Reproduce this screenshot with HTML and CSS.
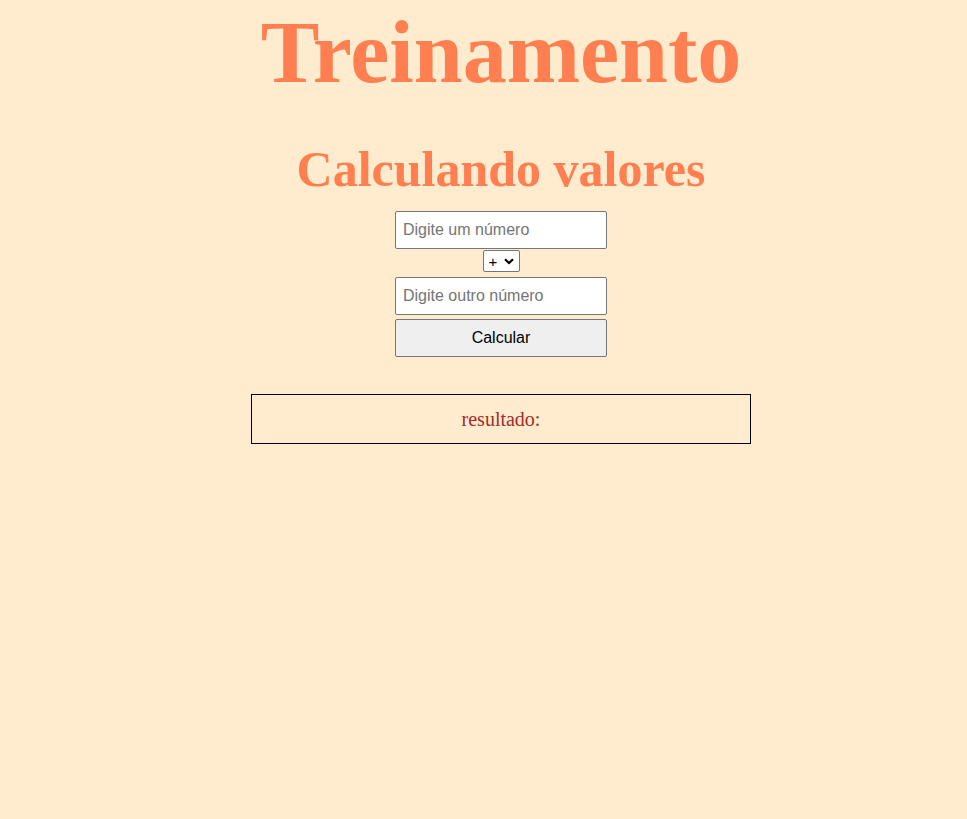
FILE: index.html
```html
<!DOCTYPE html>
<html lang="pt-BR">
<head>
<meta charset="utf-8">
<title>Treinamento</title>
<link rel="stylesheet" href="styles.css">
</head>
<body>
<h1 class="title">Treinamento</h1>
<h2 class="subtitle">Calculando valores</h2>
<form class="calc">
  <input class="field" type="number" placeholder="Digite um número">
  <span class="op-wrap">
    <select class="op">
      <option>+</option>
      <option>-</option>
      <option>*</option>
      <option>/</option>
    </select>
    <svg class="chev" width="10" height="7" viewBox="0 0 10 7"><path d="M1 1.2 L5 5 L9 1.2" fill="none" stroke="#000" stroke-width="2.2"/></svg>
  </span>
  <input class="field" type="number" placeholder="Digite outro número">
  <button class="btn" type="button">Calcular</button>
</form>
<div class="result">resultado:</div>
</body>
</html>
```
FILE: styles.css
```css
body {
  margin: 0;
  padding-left: 35px;
  background: #ffebcd;
  font-family: "Liberation Serif", "Times New Roman", serif;
  display: flex;
  flex-direction: column;
  align-items: center;
}
.title {
  color: #ff7f50;
  font-size: 88px;
  margin: 0;
  line-height: 102px;
  padding-top: 2px;
}
.subtitle {
  color: #ff7f50;
  font-size: 50px;
  margin: 37px 0 14px;
  line-height: 56px;
}
.calc {
  display: flex;
  flex-direction: column;
  align-items: center;
}
.field {
  box-sizing: border-box;
  width: 212px;
  height: 38px;
  font-family: "Liberation Sans", Arial, sans-serif;
  font-size: 16px;
  padding: 0 7px;
  border: 1px solid #767676;
  border-radius: 2px;
  background: #fff;
  margin: 0;
}
.field::placeholder { color: #757575; }
.op-wrap {
  position: relative;
  display: block;
  height: 22px;
  margin: 1px 0 5px;
}
.op {
  appearance: none;
  -webkit-appearance: none;
  box-sizing: border-box;
  width: 37px;
  height: 22px;
  padding: 0 0 0 5px;
  font-family: "Liberation Sans", Arial, sans-serif;
  font-size: 15px;
  color: #000;
  background: #fff;
  border: 1px solid #767676;
  border-radius: 2px;
  margin: 0;
}
.chev {
  position: absolute;
  right: 6px;
  top: 8px;
  pointer-events: none;
}
.btn {
  box-sizing: border-box;
  width: 212px;
  height: 38px;
  margin-top: 4px;
  font-family: "Liberation Sans", Arial, sans-serif;
  font-size: 16px;
  background: #efefef;
  border: 1px solid #767676;
  border-radius: 2px;
  color: #000;
}
.result {
  box-sizing: border-box;
  width: 500px;
  height: 50px;
  margin-top: 37px;
  border: 1px solid #000;
  display: flex;
  align-items: center;
  justify-content: center;
  color: #a52a2a;
  font-size: 20px;
}
```
